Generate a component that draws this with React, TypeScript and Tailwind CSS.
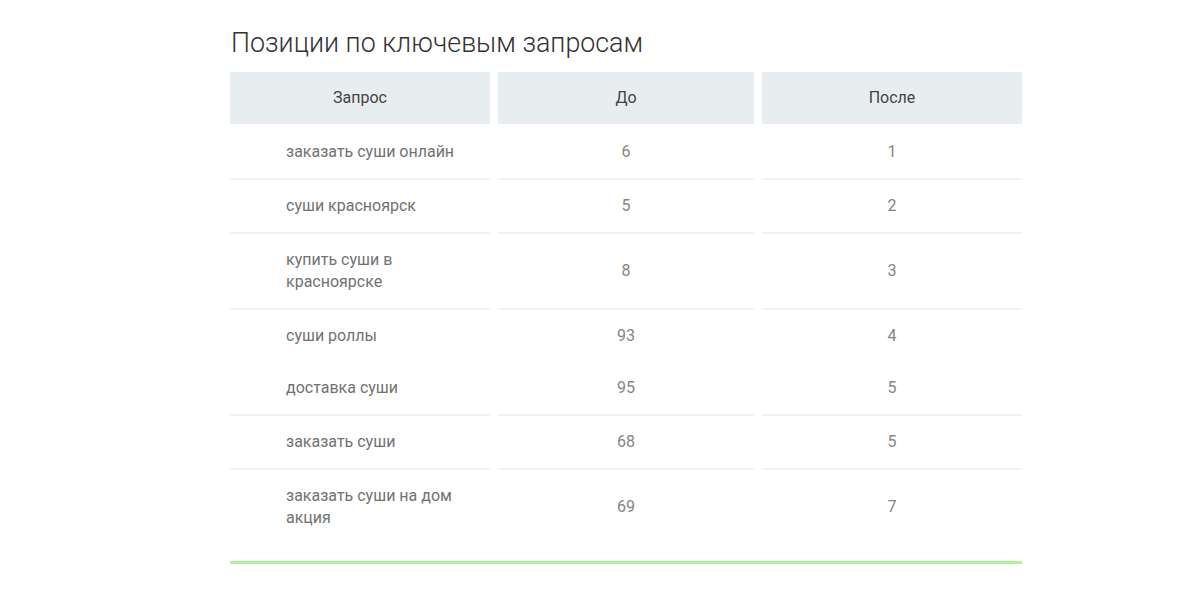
const rows = [
  { query: 'заказать суши онлайн', before: '6', after: '1', line: true },
  { query: 'суши красноярск', before: '5', after: '2', line: true },
  { query: 'купить суши в красноярске', before: '8', after: '3', line: true, narrow: true },
  { query: 'суши роллы', before: '93', after: '4', line: false },
  { query: 'доставка суши', before: '95', after: '5', line: true },
  { query: 'заказать суши', before: '68', after: '5', line: true },
  { query: 'заказать суши на дом акция', before: '69', after: '7', line: false },
];

export default function App() {
  return (
    <div className="w-full min-h-[601px] bg-white font-['Roboto',sans-serif]">
      <div className="w-[792px] ml-[230px] pt-[25px]">
        <h2 className="text-[26.8px] font-light text-[#333] leading-[36px] pl-[1px] mb-[11px]">
          Позиции по ключевым запросам
        </h2>

        {/* Table */}
        <div className="grid grid-cols-[260px_256px_260px] gap-x-2">
          {['Запрос', 'До', 'После'].map((h) => (
            <div
              key={h}
              className="h-[52px] mb-[2px] bg-[#e8eef0] flex items-center justify-center text-[16px] text-[#444]"
            >
              {h}
            </div>
          ))}

          {rows.map((r, i) => {
            const border = r.line ? 'border-b-2 border-[#eff1f2]' : '';
            return [
              <div
                key={`q${i}`}
                className={`${border} pl-[56px] pr-[20px] py-[15px] flex items-center text-[16px] leading-[22px] text-[#727272]`}
              >
                <span className={r.narrow ? 'max-w-[130px]' : ''}>{r.query}</span>
              </div>,
              <div
                key={`b${i}`}
                className={`${border} flex items-center justify-center text-[16px] text-[#858585]`}
              >
                {r.before}
              </div>,
              <div
                key={`a${i}`}
                className={`${border} flex items-center justify-center text-[16px] text-[#858585]`}
              >
                {r.after}
              </div>,
            ];
          })}
        </div>

        <div className="mt-[17px] h-[3px] bg-[#aef29e]" />
      </div>
    </div>
  );
}
